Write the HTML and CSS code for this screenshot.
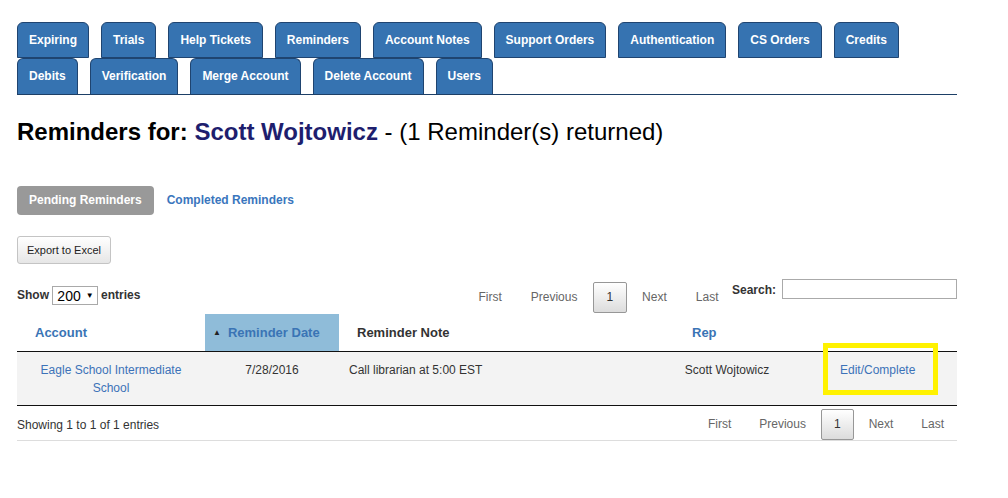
FILE: index.html
```html
<!DOCTYPE html>
<html lang="en">
  <head>
    <meta charset="UTF-8" />
    <title>Reminders</title>
    <link rel="stylesheet" href="styles.css">
  </head>
  <body>
    <div class="page">
      <!-- account tabs -->
      <ul class="tabs">
        <li><a href="#">Expiring</a></li>
        <li><a href="#">Trials</a></li>
        <li><a href="#">Help Tickets</a></li>
        <li><a href="#">Reminders</a></li>
        <li><a href="#">Account Notes</a></li>
        <li><a href="#">Support Orders</a></li>
        <li><a href="#">Authentication</a></li>
        <li><a href="#">CS Orders</a></li>
        <li><a href="#">Credits</a></li>
        <li><a href="#">Debits</a></li>
        <li><a href="#">Verification</a></li>
        <li><a href="#">Merge Account</a></li>
        <li><a href="#">Delete Account</a></li>
        <li><a href="#">Users</a></li>
      </ul>

      <h1><b>Reminders for:</b> <span class="name">Scott Wojtowicz</span> - (1 Reminder(s) returned)</h1>

      <div class="pills">
        <a href="#" class="pill active">Pending Reminders</a>
        <a href="#" class="pill">Completed Reminders</a>
      </div>

      <button class="export">Export to Excel</button>

      <div class="dt-wrapper">
        <div class="dt-top">
          <div class="dt-length">
            Show
            <span class="select">200 <span class="caret">&#9660;</span></span>
            entries
          </div>
          <div class="dt-paginate">
            <a href="#">First</a>
            <a href="#">Previous</a>
            <a href="#" class="current">1</a>
            <a href="#">Next</a>
            <a href="#">Last</a>
          </div>
          <div class="dt-filter">
            <label>Search:</label>
            <input type="text" />
          </div>
        </div>

        <table class="dt">
          <thead>
            <tr>
              <th class="col-account link">Account</th>
              <th class="col-date link sorted"><span class="sort-arrow">&#9650;</span>Reminder Date</th>
              <th class="col-note">Reminder Note</th>
              <th class="col-rep link">Rep</th>
              <th class="col-action"></th>
            </tr>
          </thead>
          <tbody>
            <tr>
              <td class="center"><a href="#">Eagle School Intermediate School</a></td>
              <td class="center">7/28/2016</td>
              <td>Call librarian at 5:00 EST</td>
              <td class="center">Scott Wojtowicz</td>
              <td class="action"><a href="#" class="highlight">Edit/Complete</a></td>
            </tr>
          </tbody>
        </table>

        <div class="dt-bottom">
          <div class="dt-info">Showing 1 to 1 of 1 entries</div>
          <div class="dt-paginate">
            <a href="#">First</a>
            <a href="#">Previous</a>
            <a href="#" class="current">1</a>
            <a href="#">Next</a>
            <a href="#">Last</a>
          </div>
        </div>
      </div>
    </div>
  </body>
</html>
```

FILE: styles.css
```css
body {
  margin: 0;
  font-family: "Liberation Sans", Arial, sans-serif;
  font-size: 12px;
  color: #333;
  background-color: #fff;
}

a {
  text-decoration: none;
}

.page {
  width: 940px;
  padding: 22px 0 0 17px;
}

/* tabs */

.tabs {
  display: flex;
  flex-wrap: wrap;
  column-gap: 12px;
  margin: 0;
  padding: 0;
  list-style: none;
  border-bottom: 1px solid #1d3f66;
}

.tabs li a {
  display: block;
  height: 34px;
  line-height: 34px;
  padding: 0 11px;
  border: 1px solid #1f4470;
  border-radius: 6px 6px 0 0;
  background-color: #3673b1;
  color: #fff;
  font-weight: bold;
  font-size: 12px;
}

.tabs li:nth-child(n+10) a {
  border-bottom: none;
  height: 35px;
}

h1 {
  margin: 23px 0 0 0;
  font-size: 24px;
  font-weight: normal;
  color: #000;
}

h1 .name {
  font-weight: bold;
  color: #1e1e6e;
}

/* pending / completed */

.pills {
  display: flex;
  align-items: center;
  gap: 1px;
  margin-top: 40px;
}

.pill {
  display: block;
  height: 29px;
  line-height: 29px;
  padding: 0 12px;
  border-radius: 4px;
  font-weight: bold;
  font-size: 12px;
  color: #3a76bd;
}

.pill.active {
  background-color: #999;
  color: #fff;
}

.export {
  display: block;
  margin-top: 21px;
  height: 28px;
  padding: 0 9px;
  font-family: "Liberation Sans", Arial, sans-serif;
  font-size: 11px;
  color: #222;
  border: 1px solid #c4c4c4;
  border-radius: 3px;
  background: linear-gradient(#ffffff, #e6e6e6);
}

/* datatable */

.dt-wrapper {
  margin-top: 15px;
  border-bottom: 1px solid #ddd;
}

.dt-top {
  display: flex;
  align-items: flex-start;
  height: 35px;
}

.dt-length {
  flex: 1;
  margin-top: 7px;
  font-weight: bold;
  color: #333;
}

.select {
  display: inline-flex;
  align-items: center;
  gap: 5px;
  height: 17px;
  padding: 0 3px 0 4px;
  border: 1px solid #a9a9a9;
  font-weight: normal;
  font-size: 14px;
  color: #000;
  vertical-align: middle;
  margin: 0;
}

.caret {
  font-size: 8px;
}

.dt-paginate {
  display: flex;
}

.dt-top .dt-paginate {
  margin-top: 3px;
}

.dt-paginate a {
  display: block;
  margin-left: 2px;
  padding: 6px 12px;
  line-height: 17px;
  border: 1px solid transparent;
  border-radius: 2px;
  color: #666;
  font-size: 12px;
}

.dt-top .dt-paginate a {
  padding: 6px 12.5px;
}

.dt-paginate a.current {
  border-color: #979797;
  background: linear-gradient(#ffffff, #dcdcdc);
  color: #333;
}

.dt-filter {
  display: flex;
  align-items: flex-start;
  gap: 6px;
}

.dt-filter label {
  margin-top: 4px;
  font-weight: bold;
  color: #333;
}

.dt-filter input {
  width: 171px;
  height: 16px;
  margin: 0;
  padding: 1px;
  border: 1px solid #aaa;
}

table.dt {
  width: 100%;
  border-collapse: collapse;
}

.dt th {
  height: 37px;
  padding: 0 0 0 18px;
  text-align: left;
  font-size: 13px;
  font-weight: bold;
  color: #333;
  border-bottom: 1px solid #111;
}

.dt th.link {
  color: #3a74b5;
}

.dt th.sorted {
  background-color: #8fbcd9;
  padding-left: 8px;
}

.sort-arrow {
  font-size: 8px;
  color: #222;
  margin-right: 7px;
  vertical-align: 2px;
}

.col-account { width: 170px; }
.col-date { width: 126px; }
.col-note { width: 317px; }
.col-rep { width: 88px; }

.dt td {
  padding: 9px 10px 8px 10px;
  line-height: 18px;
  vertical-align: top;
  background-color: #f3f3f3;
  border-bottom: 1px solid #111;
  color: #333;
}

.dt td.center {
  text-align: center;
}

.dt td a {
  color: #3c72b8;
}

.dt td.action {
  padding-left: 60px;
}

.highlight {
  position: relative;
}

.highlight::after {
  content: "";
  position: absolute;
  left: -17px;
  right: -23px;
  top: -20px;
  bottom: -18px;
  border: 5px solid #fff200;
}

.dt-bottom {
  display: flex;
  justify-content: space-between;
  align-items: flex-start;
}

.dt-info {
  padding-top: 11px;
  line-height: 17px;
  color: #333;
}

.dt-bottom .dt-paginate {
  margin-top: 3px;
}
```
